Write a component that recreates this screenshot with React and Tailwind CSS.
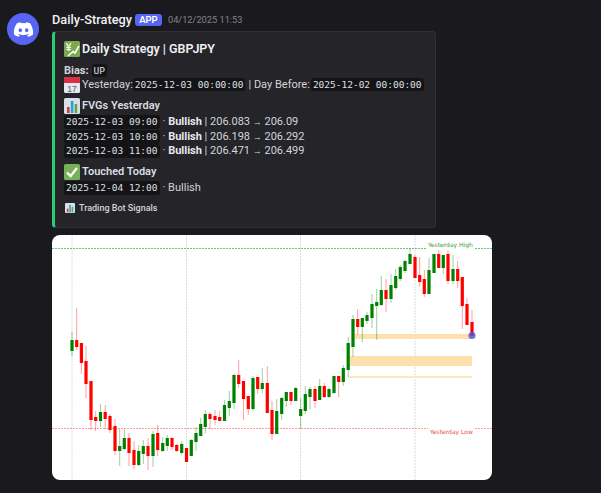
import React from "react";
import { FaDiscord } from "react-icons/fa6";

const G = "#008000";
const R = "#ff0000";
// x, bodyTop, bodyBottom, wickTop, wickBottom, colour
const candles = [
  [72, 340, 351, 332, 356, G], [76.7, 340, 347, 308, 350, R], [81.4, 343, 363, 343, 374, R], [86, 361, 384, 346, 398, R],
  [91, 381, 420, 381, 430, R], [95.7, 417, 421, 411, 431, R], [100.5, 412, 421, 404, 427, G], [105.2, 412, 419, 405, 429, R],
  [110, 416, 430, 414, 433, R], [115, 426, 451, 419, 455, R], [119.7, 446, 451, 429, 466, G], [124.3, 438, 449, 429, 450, G],
  [129, 438, 453, 433, 466, R], [134, 450, 465, 441, 469, R], [138.7, 451, 465, 445, 466, G], [143.3, 446, 454, 440, 464, G],
  [148, 446, 456, 438, 470, R], [153, 434, 456, 431, 467, G], [157.7, 433, 450, 425, 456, R], [162.7, 443, 451, 437, 452, G],
  [167.3, 438, 446, 435, 451, G], [172, 438, 447, 437, 450, R], [176.7, 445, 451, 444, 452, R], [181.7, 444, 453, 441, 455, G],
  [186.5, 448, 462, 448, 462, R], [191.3, 440, 456, 439, 456, G], [196, 433, 442, 427, 451, G], [200.7, 424, 436, 418, 436, G],
  [205.3, 414, 427, 410, 433, G], [210, 414, 419, 412, 429, R], [215, 416, 420, 410, 425, R], [219.7, 417, 421, 411, 421, R],
  [224.5, 405, 421, 400, 421, G], [229.3, 401, 408, 391, 416, G], [234, 375, 403, 374, 409, G], [238.7, 375, 384, 360, 388, R],
  [243.5, 381, 399, 381, 420, R], [248.3, 396, 409, 396, 415, R], [253, 378, 409, 376, 411, G], [257.7, 377, 389, 377, 394, R],
  [262.3, 383, 389, 368, 393, G], [267.3, 383, 413, 366, 413, R], [272, 410, 434, 401, 440, R], [276.7, 411, 434, 399, 434, G],
  [281.7, 398, 414, 397, 420, G], [286.3, 392, 401, 392, 407, G], [291, 392, 401, 392, 405, R], [295.7, 388, 401, 387, 401, G],
  [300.7, 409, 416, 398, 429, G], [305.3, 394, 411, 386, 414, G], [310, 389, 397, 387, 409, G], [315, 389, 401, 386, 408, R],
  [319.7, 386, 400, 379, 400, G], [324.3, 386, 397, 383, 398, R], [329, 389, 397, 388, 398, G], [334, 376, 393, 376, 394, G],
  [338.7, 376, 382, 376, 397, R], [343.3, 368, 382, 365, 386, G], [348.2, 343, 370, 337, 377, G], [353, 319, 347, 315, 357, G],
  [357.7, 319, 327, 309, 335, R], [362.3, 318, 327, 318, 342, G], [367, 315, 321, 312, 324, G], [372, 304, 318, 294, 328, G],
  [376.7, 302, 306, 289, 340, G], [381.3, 290, 305, 276, 306, G], [386, 290, 299, 279, 312, R], [391, 285, 299, 274, 303, G],
  [395.7, 276, 288, 269, 290, G], [400.3, 267, 279, 265, 281, G], [405, 261, 271, 259, 273, G], [410, 254, 264, 248, 264, G],
  [415, 257, 278, 255, 278, R], [419.7, 275, 282, 257, 287, R], [424.3, 279, 294, 270, 297, R], [429, 270, 294, 258, 294, G],
  [434, 254, 273, 254, 273, G], [438.7, 254, 268, 250, 268, R], [443.3, 255, 268, 255, 274, G], [448, 254, 281, 250, 284, R],
  [453, 269, 281, 255, 284, G], [457.7, 269, 281, 261, 288, R], [462.3, 277, 306, 277, 329, R], [467, 304, 325, 298, 325, R],
  [472, 322, 336, 310, 336, R],
];

function Chart() {
  // image origin on the page: 52, 235
  return (
    <div className="w-[440px] h-[245px] mt-[7px] rounded-lg overflow-hidden bg-white">
      <svg width="440" height="245" viewBox="52 235 440 245" className="block">
        {[72, 186.5, 300.5, 415].map((x) => (
          <line key={x} x1={x} x2={x} y1="235" y2="480" stroke="#dcdcdc" strokeWidth="1" strokeDasharray="2 1" />
        ))}
        <rect x="355" y="334" width="117" height="5" fill="#fde0ae" />
        <rect x="350" y="356" width="122" height="10" fill="#fde0ae" />
        <rect x="348" y="376" width="124" height="2" fill="#fde8c4" />
        <line x1="52" x2="492" y1="248.5" y2="248.5" stroke="#008000" strokeOpacity="0.65" strokeWidth="0.8" strokeDasharray="2 1" />
        <line x1="52" x2="492" y1="428.5" y2="428.5" stroke="#ff0000" strokeOpacity="0.5" strokeWidth="0.8" strokeDasharray="2 1" />
        {candles.map(([x, t, b, wt, wb, c]) => (
          <g key={x}>
            <rect x={x - 0.5} y={wt} width="1" height={wb - wt} fill={c} fillOpacity="0.38" />
            <rect x={x - 1.6} y={t} width="3.2" height={b - t} fill={c} />
          </g>
        ))}
        <circle cx="472" cy="335.5" r="3.6" fill="#5050d8" fillOpacity="0.8" />
        <rect x="426" y="240" width="48" height="9" fill="#fff" />
        <text x="428" y="246.5" fontSize="6" fill="#3c9a3c" fontFamily="'DejaVu Sans', sans-serif">Yesterday High</text>
        <rect x="428" y="427" width="46" height="9" fill="#fff" />
        <text x="430" y="434" fontSize="6" fill="#f04848" fontFamily="'DejaVu Sans', sans-serif">Yesterday Low</text>
      </svg>
    </div>
  );
}

function Emoji({ kind, size = 16 }) {
  return (
    <svg width={size} height={size} viewBox="0 0 16 16" className="shrink-0 block">
      {kind === "yen" && (
        <>
          <rect width="16" height="16" rx="1.5" fill="#7da84f" />
          <text x="4.5" y="10" fontSize="10" fontWeight="700" textAnchor="middle" fill="#f3f6e8" fontFamily="'Liberation Sans', sans-serif">¥</text>
          <path d="M4 15 L9 10.5 L11 12 L15 5" stroke="#fff" strokeWidth="1.6" fill="none" />
        </>
      )}
      {kind === "cal" && (
        <>
          <rect width="16" height="16" rx="1.5" fill="#e4e8ec" />
          <path d="M0 1.5A1.5 1.5 0 0 1 1.5 0h13A1.5 1.5 0 0 1 16 1.5V6H0Z" fill="#d9304a" />
          <text x="8" y="14.5" fontSize="8.5" textAnchor="middle" fill="#55606a" fontFamily="'Liberation Sans', sans-serif">17</text>
        </>
      )}
      {kind === "bars" && (
        <>
          <rect width="16" height="16" rx="1.5" fill="#d9dfe6" />
          <rect x="3" y="9" width="2.6" height="6" fill="#d6394c" />
          <rect x="6.8" y="3" width="2.6" height="12" fill="#2e9fd8" />
          <rect x="10.6" y="6" width="2.6" height="9" fill="#5cab3c" />
        </>
      )}
      {kind === "check" && (
        <>
          <rect width="16" height="16" rx="1.5" fill="#78b159" />
          <path d="M3 8.5 L6.6 12 L13 4" stroke="#fff" strokeWidth="2.2" fill="none" />
        </>
      )}
    </svg>
  );
}

function Code({ children }) {
  return (
    <code className="bg-[#141417] rounded-[3px] px-[2px] py-[1px] text-[9.5px] leading-[12px] whitespace-nowrap text-[#dfe0e3] font-['DejaVu_Sans_Mono',monospace]">
      {children}
    </code>
  );
}

function Heading({ icon, children, cls }) {
  return (
    <div className={`flex items-center h-4 font-semibold text-[#dbdee1] text-[11px] ${cls}`}>
      <Emoji kind={icon} />
      <span className="ml-[2px]">{children}</span>
    </div>
  );
}

function FvgLine({ code, from, to, cls }) {
  return (
    <div className={`flex items-center h-[14px] ${cls}`}>
      <Code>{code}</Code>
      <span className="ml-[3px]">
        · <b className="font-bold text-[#e8e9ec]">Bullish</b> | {from}{" "}
        <span className="text-[9px] font-['Liberation_Sans',sans-serif]">→</span> {to}
      </span>
    </div>
  );
}

export default function App() {
  return (
    <div className="w-[601px] h-[493px] bg-[#1a1a1e] flex items-start pl-[7px] pt-[11px] overflow-hidden font-['Roboto',sans-serif]">
      <div className="w-8 h-8 mt-[2px] rounded-full bg-[#5865f2] flex items-center justify-center shrink-0">
        <FaDiscord className="text-white w-[21px] h-[21px]" />
      </div>
      <div className="ml-[13px] flex flex-col items-start">
        <div className="flex items-center h-[18px]">
          <span className="text-[12.75px] font-medium text-[#f0f1f3]">Daily-Strategy</span>
          <span className="ml-[3px] h-[12px] w-[27px] rounded-[3px] bg-[#5865f2] text-white text-[9.5px] font-semibold flex items-center justify-center">APP</span>
          <span className="ml-[6px] text-[9.25px] text-[#82838b]">04/12/2025 11:53</span>
        </div>
        <div className="w-[384px] h-[197px] mt-[2px] bg-[#242429] border border-[#2f2f35] border-l-[3px] border-l-[#2ecc71] rounded-[4px] pl-[9px] pt-[9px] text-[11px] leading-[14px] text-[#d4d5d9] whitespace-nowrap">
          <div className="flex items-center h-4 font-semibold text-[12.5px] text-[#eeeff1]">
            <Emoji kind="yen" />
            <span className="ml-[2px]">Daily Strategy | GBPJPY</span>
          </div>
          <div className="flex items-center h-[14px] mt-[7px]">
            <b className="font-bold">Bias:</b>
            <span className="ml-[3px]"><Code>UP</Code></span>
          </div>
          <div className="flex items-center h-[14px]">
            <Emoji kind="cal" />
            <span className="ml-[2px]">Yesterday:</span>
            <span className="ml-0"><Code>2025-12-03 00:00:00</Code></span>
            <span className="ml-[3px]">| Day Before:</span>
            <span className="ml-[1px]"><Code>2025-12-02 00:00:00</Code></span>
          </div>
          <Heading icon="bars" cls="mt-[6px]">FVGs Yesterday</Heading>
          <FvgLine cls="mt-[1px]" code="2025-12-03 09:00" from="206.083" to="206.09" />
          <FvgLine cls="mt-[1px]" code="2025-12-03 10:00" from="206.198" to="206.292" />
          <FvgLine code="2025-12-03 11:00" from="206.471" to="206.499" />
          <Heading icon="check" cls="mt-[6px]">Touched Today</Heading>
          <div className="flex items-center h-[14px] mt-[1px]">
            <Code>2025-12-04 12:00</Code>
            <span className="ml-[3px]">· Bullish</span>
          </div>
          <div className="flex items-center h-[14px] mt-[6px] text-[9px] font-medium">
            <span className="ml-[1px]"><Emoji kind="bars" size={10} /></span>
            <span className="ml-[4px]">Trading Bot Signals</span>
          </div>
        </div>
        <Chart />
      </div>
    </div>
  );
}
